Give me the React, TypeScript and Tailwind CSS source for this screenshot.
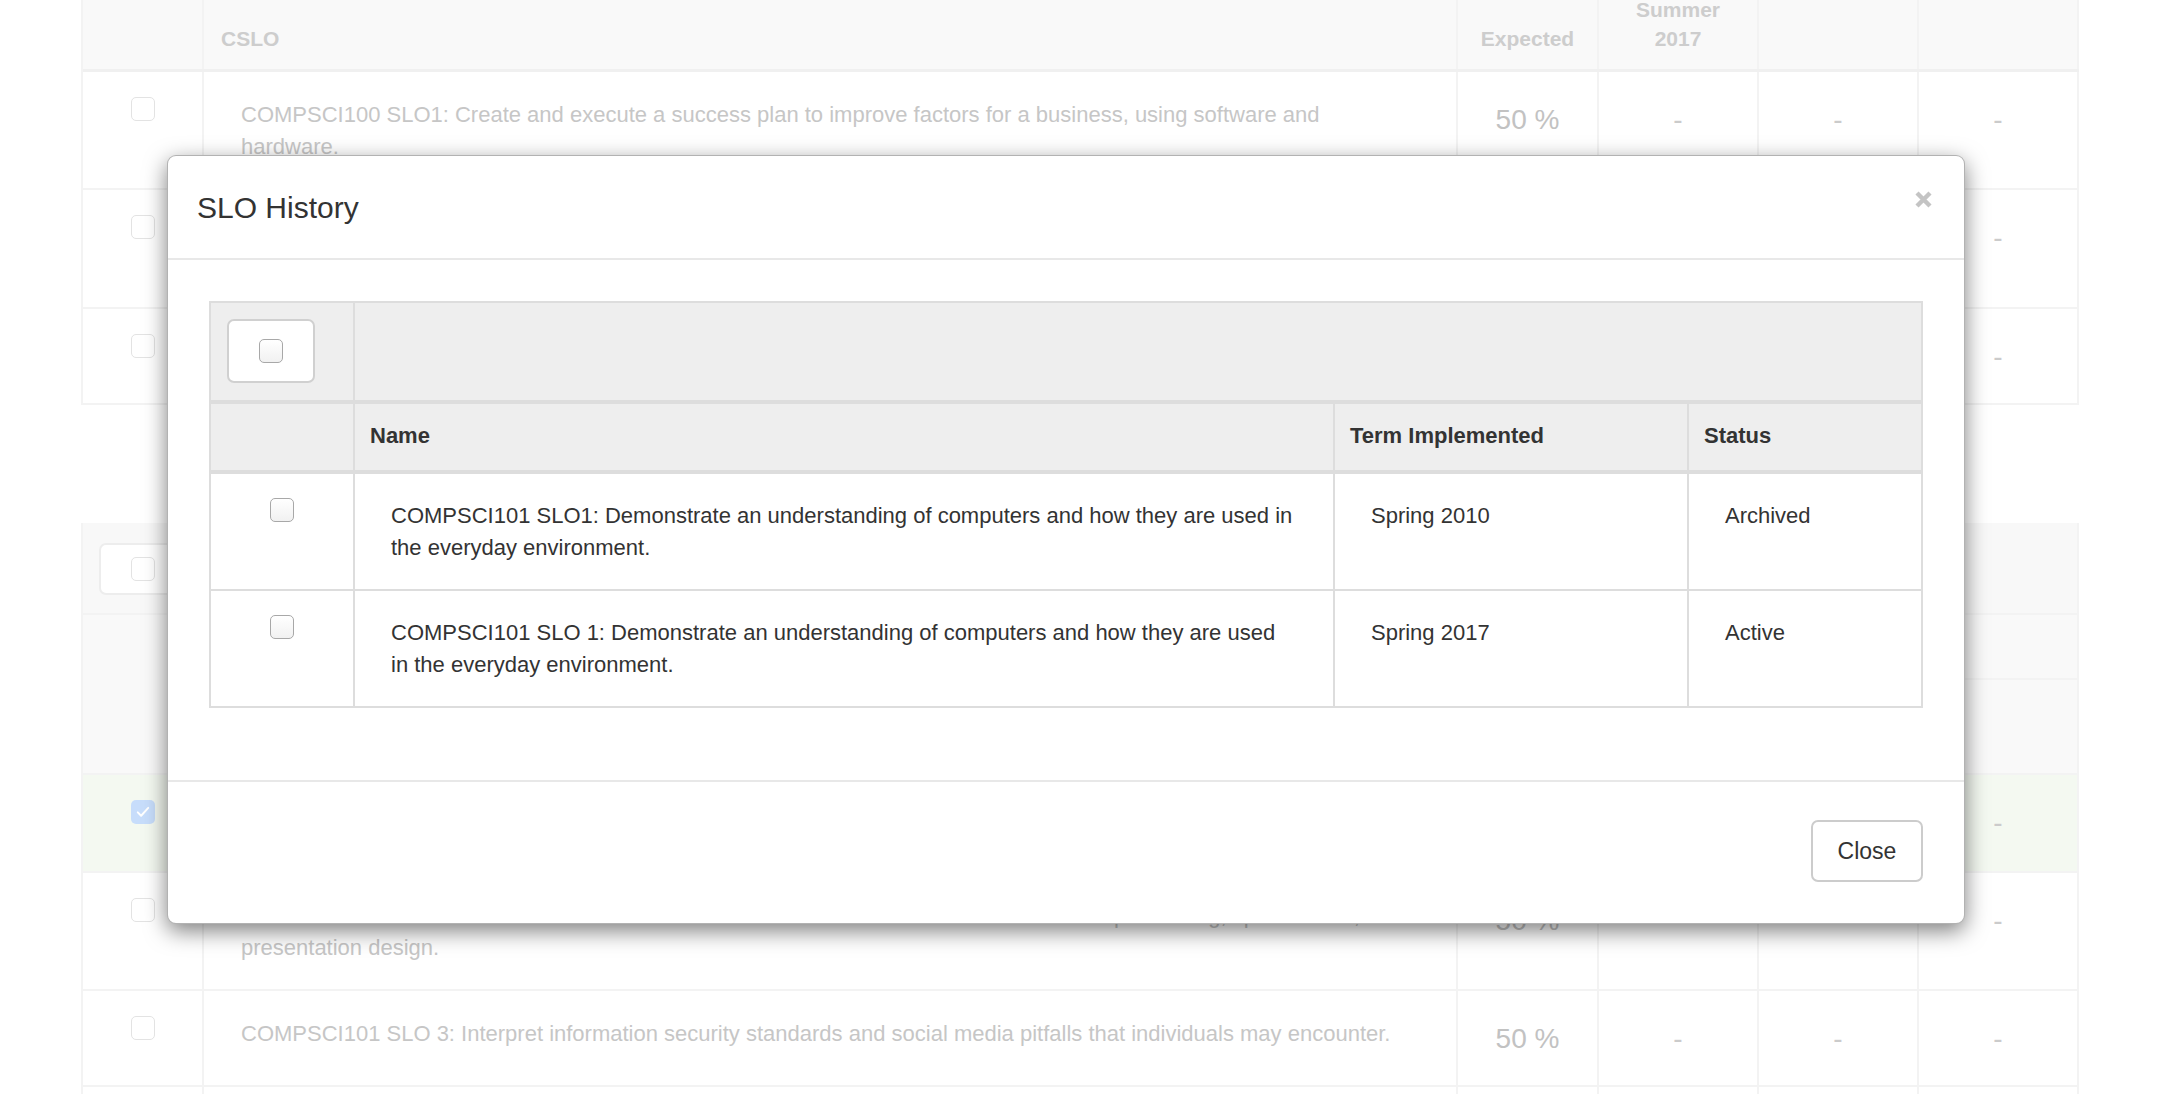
const BG_COLS = "grid grid-cols-[121px_1254px_141px_160px_160px_160px]";
const M_COLS = "grid grid-cols-[144px_980px_354px_232px]";

const BgCheckbox = ({ checked = false }: { checked?: boolean }) =>
  checked ? (
    <span className="flex h-[24px] w-[24px] items-center justify-center rounded-[5px] bg-[#c7ddfb]">
      <svg width="18" height="18" viewBox="0 0 24 24" fill="none">
        <path d="M5 12.5l4.5 4.5L19 6.5" stroke="#fff" strokeWidth="2.6" strokeLinecap="round" strokeLinejoin="round" />
      </svg>
    </span>
  ) : (
    <span className="block h-[24px] w-[24px] rounded-[5px] border border-[#e3e3e3] bg-white" />
  );

const ModalCheckbox = () => (
  <span className="block h-[24px] w-[24px] rounded-[5px] border border-[#a8a8a8] bg-gradient-to-b from-white to-[#f1f1f1]" />
);

type BgRowProps = { text: string; h: string; checked?: boolean; green?: boolean };

const BgRow = ({ text, h, checked, green }: BgRowProps) => (
  <div className={`${BG_COLS} ${h} border-b-2 border-[#f3f3f3] ${green ? "bg-[#f4f9f1]" : "bg-white"}`}>
    <div className="flex justify-center border-r-2 border-[#f3f3f3] pt-[25px]">
      <BgCheckbox checked={checked} />
    </div>
    <div className="border-r-2 border-[#f3f3f3] pl-[37px] pr-[37px] pt-[27px] text-[22px] leading-[32px] text-[#c6c6c6]">
      {text}
    </div>
    <div className="border-r-2 border-[#f3f3f3] pt-[27px] text-center text-[28px] leading-[42px] text-[#c2c2c2]">50 %</div>
    <div className="border-r-2 border-[#f3f3f3] pt-[27px] text-center text-[28px] leading-[42px] text-[#cbcbcb]">-</div>
    <div className="border-r-2 border-[#f3f3f3] pt-[27px] text-center text-[28px] leading-[42px] text-[#cbcbcb]">-</div>
    <div className="border-r-2 border-[#f3f3f3] pt-[27px] text-center text-[28px] leading-[42px] text-[#cbcbcb]">-</div>
  </div>
);

const EmptyBgRow = () => (
  <div className={`${BG_COLS} h-[118px]`}>
    <div className="border-r-2 border-[#f3f3f3]" />
    <div className="border-r-2 border-[#f3f3f3]" />
    <div className="border-r-2 border-[#f3f3f3]" />
    <div className="border-r-2 border-[#f3f3f3]" />
    <div className="border-r-2 border-[#f3f3f3]" />
    <div className="border-r-2 border-[#f3f3f3]" />
  </div>
);

const BgHeader = () => (
  <div className={`${BG_COLS} h-[72px] grid-rows-[69px] border-b-[3px] border-[#f0f0f0] bg-[#f9f9f9] text-[21px] font-bold leading-[29px] text-[#cdcdcd]`}>
    <div className="border-r-2 border-[#f3f3f3]" />
    <div className="flex items-end border-r-2 border-[#f3f3f3] pb-[16px] pl-[17px]">CSLO</div>
    <div className="flex items-end justify-center border-r-2 border-[#f3f3f3] pb-[16px]">Expected</div>
    <div className="flex items-end justify-center border-r-2 border-[#f3f3f3] pb-[16px] text-center">
      <span>
        Summer
        <br />
        2017
      </span>
    </div>
    <div className="border-r-2 border-[#f3f3f3]" />
    <div className="border-r-2 border-[#f3f3f3]" />
  </div>
);

const HistoryRow = ({ name, term, status, last }: { name: string; term: string; status: string; last?: boolean }) => (
  <div className={`${M_COLS} ${last ? "h-[115px]" : "h-[117px] border-b-2 border-[#dddddd]"}`}>
    <div className="flex justify-center border-r-2 border-[#dddddd] pt-[24px]">
      <ModalCheckbox />
    </div>
    <div className="border-r-2 border-[#dddddd] pl-[36px] pr-[37px] pt-[26px]">{name}</div>
    <div className="border-r-2 border-[#dddddd] pl-[36px] pt-[26px]">{term}</div>
    <div className="pl-[36px] pt-[26px]">{status}</div>
  </div>
);

export default function App() {
  return (
    <div className="relative h-[1094px] w-[2180px] overflow-hidden bg-white font-['Liberation_Sans',Arial,Helvetica,sans-serif]">
      {/* page behind the dialog */}
      <div className="ml-[81px] w-[1998px]">
        <div className="border-l-2 border-[#f3f3f3]">
          <BgHeader />
          <BgRow
            h="h-[118px]"
            text="COMPSCI100 SLO1: Create and execute a success plan to improve factors for a business, using software and hardware."
          />
          <BgRow h="h-[119px]" text="COMPSCI100 SLO2: Use business software to organize, analyze and present data for a small business." />
          <BgRow h="h-[96px]" text="COMPSCI100 SLO3: Evaluate hardware options." />
        </div>

        <div className="mt-[118px] border-l-2 border-[#f3f3f3]">
          <div className={`${BG_COLS} h-[92px] border-b-2 border-[#f3f3f3] bg-[#f8f8f8]`}>
            <div className="border-r-2 border-[#f3f3f3] pl-[16px] pt-[20px]">
              <div className="flex h-[52px] w-[88px] items-center justify-center rounded-[7px] border-2 border-[#ededed] bg-white">
                <BgCheckbox />
              </div>
            </div>
            <div className="col-span-5 border-r-2 border-[#f3f3f3]" />
          </div>
          <div className={`${BG_COLS} grid-rows-[65px_93px] border-b-2 border-[#f3f3f3] bg-[#f9f9f9] text-[21px] font-bold leading-[29px] text-[#cdcdcd]`}>
            <div className="row-span-2 border-r-2 border-[#f3f3f3]" />
            <div className="col-span-5 border-b-2 border-r-2 border-[#f3f3f3]" />
            <div className="flex items-end border-r-2 border-[#f3f3f3] pb-[17px] pl-[17px]">CSLO</div>
            <div className="flex items-end justify-center border-r-2 border-[#f3f3f3] pb-[17px]">Expected</div>
            <div className="flex items-end justify-center border-r-2 border-[#f3f3f3] pb-[17px] text-center">
              <span>
                Summer
                <br />
                2017
              </span>
            </div>
            <div className="border-r-2 border-[#f3f3f3]" />
            <div className="border-r-2 border-[#f3f3f3]" />
          </div>
          <BgRow
            h="h-[98px]"
            checked
            green
            text="COMPSCI101 SLO 1: Demonstrate an understanding of computers and how they are used in the everyday environment."
          />
          <BgRow
            h="h-[118px]"
            text="COMPSCI101 SLO 2: Perform various tasks associated with the use of software for word processing, spreadsheet, and presentation design."
          />
          <BgRow
            h="h-[96px]"
            text="COMPSCI101 SLO 3: Interpret information security standards and social media pitfalls that individuals may encounter."
          />
          <EmptyBgRow />
        </div>
      </div>

      {/* SLO History dialog */}
      <div className="absolute left-[167px] top-[155px] w-[1798px] rounded-[9px] border border-black/30 bg-white text-[#333] shadow-[0_7px_22px_rgba(0,0,0,0.5)]">
        <div className="flex items-start justify-between border-b-2 border-[#e8e8e8] pb-[34px] pl-[29px] pr-[32px] pt-[35px]">
          <h4 className="text-[30px] leading-[33px]">SLO History</h4>
          <svg width="17" height="17" viewBox="0 0 17 17" fill="none">
            <path d="M2 2L15 15M15 2L2 15" stroke="#c4c4c4" strokeWidth="4.4" />
          </svg>
        </div>

        <div className="px-[41px] pb-[72px] pt-[41px]">
          <div className="border-2 border-[#dddddd] text-[22px] leading-[32px]">
            <div className={`${M_COLS} h-[101px] border-b-4 border-[#dddddd] bg-[#eeeeee]`}>
              <div className="border-r-2 border-[#dddddd] pl-[16px] pt-[16px]">
                <div className="flex h-[64px] w-[88px] items-center justify-center rounded-[7px] border-2 border-[#d0d0d0] bg-white">
                  <ModalCheckbox />
                </div>
              </div>
              <div className="col-span-3" />
            </div>
            <div className={`${M_COLS} h-[70px] border-b-4 border-[#dddddd] bg-[#eeeeee] font-bold`}>
              <div className="border-r-2 border-[#dddddd]" />
              <div className="border-r-2 border-[#dddddd] pl-[15px] pt-[16px]">Name</div>
              <div className="border-r-2 border-[#dddddd] pl-[15px] pt-[16px]">Term Implemented</div>
              <div className="pl-[15px] pt-[16px]">Status</div>
            </div>
            <HistoryRow
              name="COMPSCI101 SLO1: Demonstrate an understanding of computers and how they are used in the everyday environment."
              term="Spring 2010"
              status="Archived"
            />
            <HistoryRow
              last
              name="COMPSCI101 SLO 1: Demonstrate an understanding of computers and how they are used in the everyday environment."
              term="Spring 2017"
              status="Active"
            />
          </div>
        </div>

        <div className="flex justify-end border-t-2 border-[#e8e8e8] px-[41px] pb-[41px] pt-[38px]">
          <button className="h-[62px] w-[112px] rounded-[7px] border-2 border-[#cccccc] bg-white text-[23px] text-[#333]">
            Close
          </button>
        </div>
      </div>
    </div>
  );
}
